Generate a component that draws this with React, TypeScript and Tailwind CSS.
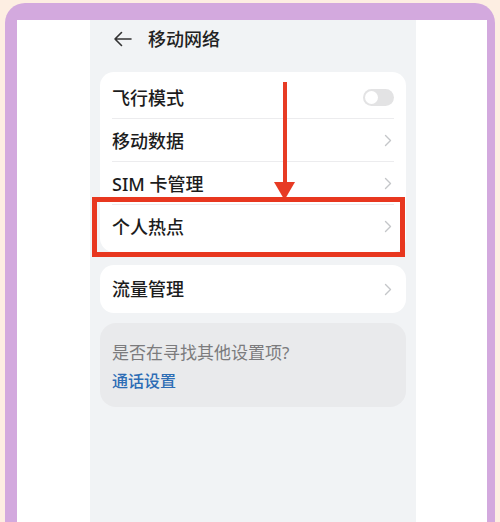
import React from 'react';

const Chevron = () => (
  <svg width="8" height="13" viewBox="0 0 8 13" fill="none">
    <path d="M1.5 1.5 L6.5 6.5 L1.5 11.5" stroke="#c4c6c9" strokeWidth="1.4" strokeLinecap="round" strokeLinejoin="round" />
  </svg>
);

const Row = ({ label, toggle, last }: { label: string; toggle?: boolean; last?: boolean }) => (
  <div className="flex h-[43px] items-center justify-between mx-3 relative">
    <span className="text-[18px] font-medium text-[#1c1c1c] leading-none">{label}</span>
    {toggle ? (
      <div className="w-[31px] h-[17px] rounded-full bg-[#e3e3e4] flex items-center px-[2px]">
        <div className="w-[13px] h-[13px] rounded-full bg-white" />
      </div>
    ) : (
      <div className="mr-[2px]"><Chevron /></div>
    )}
    {!last && <div className="absolute left-0 right-0 bottom-0 h-px bg-[#ececee]" />}
  </div>
);

export default function App() {
  return (
    <div
      className="relative w-[500px] h-[522px] overflow-hidden bg-[#fdeee2] pl-[5px] pr-[5px] pt-[3px]"
      style={{ fontFamily: '"Noto Sans", "Noto Sans CJK SC", sans-serif' }}
    >
      {/* purple frame */}
      <div className="h-full rounded-t-[20px] bg-[#d3a9de] pl-[12px] pr-[8px] pt-[17px]">
        <div className="h-full bg-white flex">
          {/* phone screen */}
          <div className="ml-[73px] w-[326px] h-full bg-[#f1f3f5] px-[10px]">
            {/* header */}
            <div className="h-[37px] flex items-center pl-[13px]">
              <svg width="19" height="16" viewBox="0 0 19 16" fill="none">
                <path d="M18 8 H2 M8.5 1.5 L2 8 L8.5 14.5" stroke="#333" strokeWidth="1.6" strokeLinecap="round" strokeLinejoin="round" />
              </svg>
              <span className="ml-[16px] text-[18px] font-medium text-[#222] leading-none">移动网络</span>
            </div>

            {/* main card */}
            <div className="mt-[15px] bg-white rounded-[14px] py-[4px]">
              <Row label="飞行模式" toggle />
              <Row label="移动数据" />
              <Row label="SIM 卡管理" />
              <Row label="个人热点" last />
            </div>

            {/* data card */}
            <div className="mt-[13px] bg-white rounded-[14px] h-[48px] flex items-center justify-between px-3">
              <span className="text-[18px] font-medium text-[#1c1c1c] leading-none">流量管理</span>
              <div className="mr-[2px]"><Chevron /></div>
            </div>

            {/* suggestion card */}
            <div className="mt-[10px] bg-[#e9eaec] rounded-[16px] h-[84px] px-3 pt-[19px]">
              <div className="text-[17px] text-[#7b7b7d] leading-[22px]">是否在寻找其他设置项?</div>
              <div className="mt-[7px] text-[16px] font-medium text-[#2d6db5] leading-[20px]">通话设置</div>
            </div>
          </div>
        </div>
      </div>

      {/* red annotation arrow */}
      <div className="absolute left-[283px] top-[82px] w-[4px] h-[106px] bg-[#e73b24]" />
      <svg className="absolute left-[274px] top-[182px]" width="21" height="18" viewBox="0 0 21 18">
        <path d="M0 0 L21 0 L10.5 18 Z" fill="#e73b24" />
      </svg>

      {/* red highlight box */}
      <div className="absolute left-[92px] top-[197px] w-[313px] h-[60px] border-[5px] border-[#e8371f]" />
    </div>
  );
}
